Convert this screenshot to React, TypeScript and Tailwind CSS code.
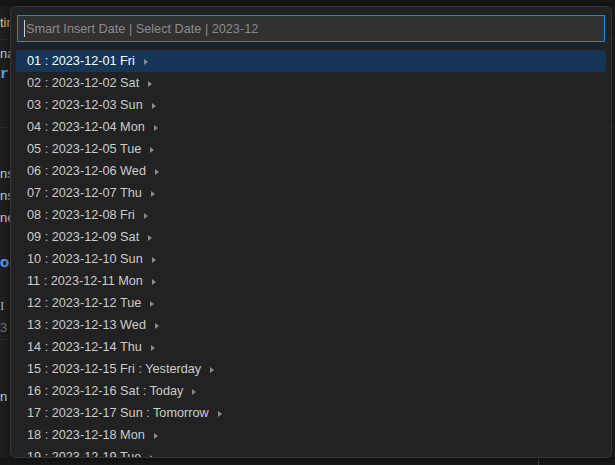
const days = ["Fri", "Sat", "Sun", "Mon", "Tue", "Wed", "Thu"];

const notes: Record<number, string> = {
  15: "Yesterday",
  16: "Today",
  17: "Tomorrow",
};

const rows = Array.from({ length: 19 }, (_, i) => {
  const d = i + 1;
  const dd = String(d).padStart(2, "0");
  const label = `${dd} : 2023-12-${dd} ${days[i % 7]}`;
  return notes[d] ? `${label} : ${notes[d]}` : label;
});

const Arrow = () => (
  <span className="ml-[9px] inline-block h-0 w-0 border-y-[3px] border-l-[4px] border-y-transparent border-l-[#8a8a8a]" />
);

const Editor = () => (
  <div className="flex h-full flex-col font-['Liberation_Sans',sans-serif] text-[13px]">
    <div className="h-[6px] bg-[#181818]" />
    <div className="flex h-[34px] items-center border-b border-[#2b2b2b] bg-[#1f1f1f] text-[#e2c08d]">
      tin
    </div>
    <div className="h-[88px] border-b border-[#2b2b2b] pt-[4px] text-[#cccccc]">
      <div className="h-[20px] leading-[20px]">nar</div>
      <div className="font-['Liberation_Mono',monospace] text-[15px] font-bold text-[#4daafc]">rt</div>
    </div>
    <div className="pt-[35px] leading-[22px] text-[#cccccc]">
      <div>ns</div>
      <div>ns</div>
      <div>ne</div>
      <div className="mt-[22px] text-[15px] font-bold text-[#4daafc]">or</div>
      <div className="mt-[22px] font-['Liberation_Serif',serif] text-[#aaaaaa]">I</div>
      <div className="border-b border-[#2b2b2b] text-[#777777]">3</div>
      <div className="mt-[46px]">n</div>
    </div>
    <div className="flex-1" />
    <div className="flex h-[8px] bg-[#181818]">
      <div className="w-[539px] border-r border-[#3c3c3c]" />
    </div>
  </div>
);

export default function App() {
  return (
    <div className="relative h-[465px] w-[615px] overflow-hidden bg-[#1f1f1f]">
      <Editor />
      <div className="absolute left-[10px] top-[6px] flex h-[452px] w-[602px] flex-col overflow-hidden rounded-[6px] border border-[#363636] bg-[#222222] font-['Liberation_Sans',sans-serif] text-[12.7px] shadow-[0_0_8px_rgba(0,0,0,0.6)]">
        <div className="px-[6px] pt-[8px]">
          <div className="flex h-[27px] items-center border border-[#2f80d8] bg-[#313131] pl-[6px]">
            <span className="h-[17px] w-px bg-[#cfcfcf]" />
            <span className="ml-[1px] pt-[2px] text-[#8b8b8b]">
              Smart Insert Date | Select Date | 2023-12
            </span>
          </div>
        </div>
        <div className="mt-[8px] px-[5px]">
          {rows.map((r, i) => (
            <div
              key={i}
              className={`flex h-[22px] items-center rounded-[3px] pl-[11px] pt-[2px] ${
                i === 0 ? "bg-[#153656] text-white" : "text-[#cccccc]"
              }`}
            >
              <span className="whitespace-pre">{r}</span>
              <Arrow />
            </div>
          ))}
        </div>
      </div>
    </div>
  );
}
